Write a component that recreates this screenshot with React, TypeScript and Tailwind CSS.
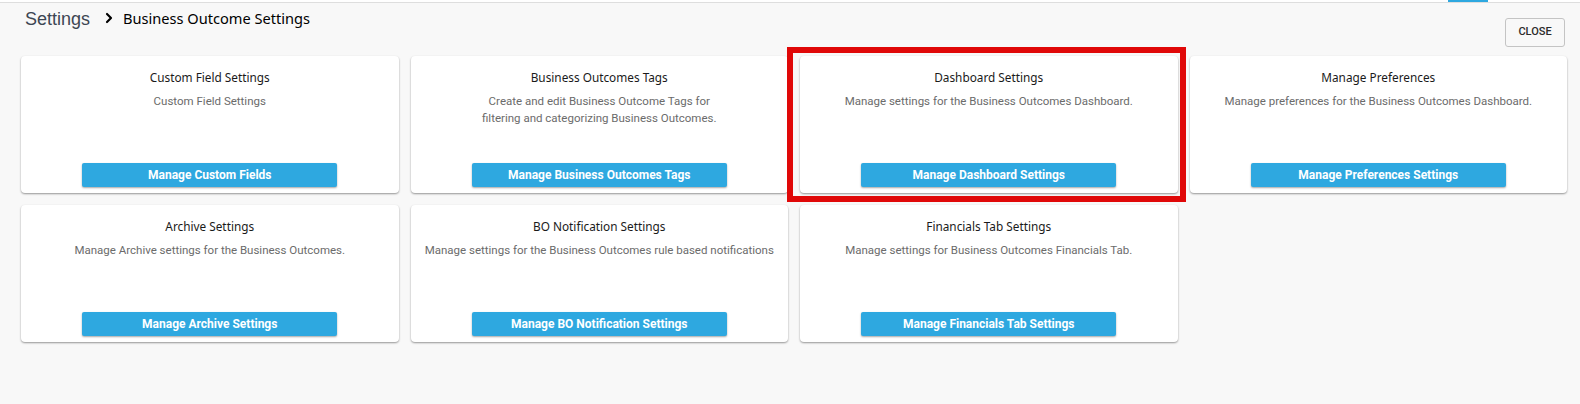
import { ChevronRight } from "lucide-react";

const CARDS = [
  { title: "Custom Field Settings", desc: ["Custom Field Settings"], button: "Manage Custom Fields" },
  {
    title: "Business Outcomes Tags",
    desc: ["Create and edit Business Outcome Tags for", "filtering and categorizing Business Outcomes."],
    button: "Manage Business Outcomes Tags",
  },
  {
    title: "Dashboard Settings",
    desc: ["Manage settings for the Business Outcomes Dashboard."],
    button: "Manage Dashboard Settings",
    highlight: true,
  },
  {
    title: "Manage Preferences",
    desc: ["Manage preferences for the Business Outcomes Dashboard."],
    button: "Manage Preferences Settings",
  },
  {
    title: "Archive Settings",
    desc: ["Manage Archive settings for the Business Outcomes."],
    button: "Manage Archive Settings",
  },
  {
    title: "BO Notification Settings",
    desc: ["Manage settings for the Business Outcomes rule based notifications"],
    button: "Manage BO Notification Settings",
  },
  {
    title: "Financials Tab Settings",
    desc: ["Manage settings for Business Outcomes Financials Tab."],
    button: "Manage Financials Tab Settings",
  },
];

export default function App() {
  return (
    <div className="w-[1580px] h-[404px] bg-[#f8f8f8] overflow-hidden" style={{ fontFamily: "Roboto, sans-serif" }}>
      {/* top strip */}
      <div className="relative h-[3px] border-b border-[#dedede] bg-white">
        <div className="absolute left-[1448px] top-0 h-[2px] w-[40px] bg-[#2ea8e0]" />
      </div>

      <div className="flex items-start justify-between pl-[25px] pr-[15px]">
        <div className="flex items-center pt-[3px]">
          <span className="text-[18px] text-[#3d4653]" style={{ fontFamily: "'Liberation Sans', sans-serif" }}>
            Settings
          </span>
          <ChevronRight size={16} strokeWidth={3.2} className="ml-[11px] mr-[6px] -mt-[3px] text-black" />
          <span className="text-[14.6px] text-black -mt-[2px]" style={{ fontFamily: "'Noto Sans', sans-serif" }}>
            Business Outcome Settings
          </span>
        </div>
        <button className="mt-[15px] h-[29px] w-[60px] rounded-[3px] border border-[#c4c4c4] bg-[#f8f8f8] text-[11px] font-medium text-[#2b2b2b]">
          CLOSE
        </button>
      </div>

      <div className="mt-[9px] grid grid-cols-4 gap-3 pl-[21px] pr-[13px]">
        {CARDS.map((c, i) => (
          <div key={i} className="relative">
            {c.highlight && (
              <div className="absolute -left-[13px] -top-[9px] -right-[8px] -bottom-[9px] border-[6px] border-[#e00808]" />
            )}
            <div className="relative flex h-[137px] flex-col items-center rounded-[4px] bg-white pt-[12px] pb-[6px] shadow-[0_1px_2px_rgba(0,0,0,0.4)]">
              <div className="text-[11.8px] leading-[18px] text-[#1a1a1a]" style={{ fontFamily: "'Noto Sans', sans-serif" }}>
                {c.title}
              </div>
              <div className="mt-[7px] text-center text-[11.5px] leading-[17px] text-[#6b6b6b]">
                {c.desc.map((d, j) => (
                  <div key={j}>{d}</div>
                ))}
              </div>
              <button className="mt-auto h-[24px] w-[255px] rounded-[2px] bg-[#2ea8e0] text-[12px] font-bold text-white shadow-[0_1px_2px_rgba(0,0,0,0.35)]">
                {c.button}
              </button>
            </div>
          </div>
        ))}
      </div>
    </div>
  );
}
